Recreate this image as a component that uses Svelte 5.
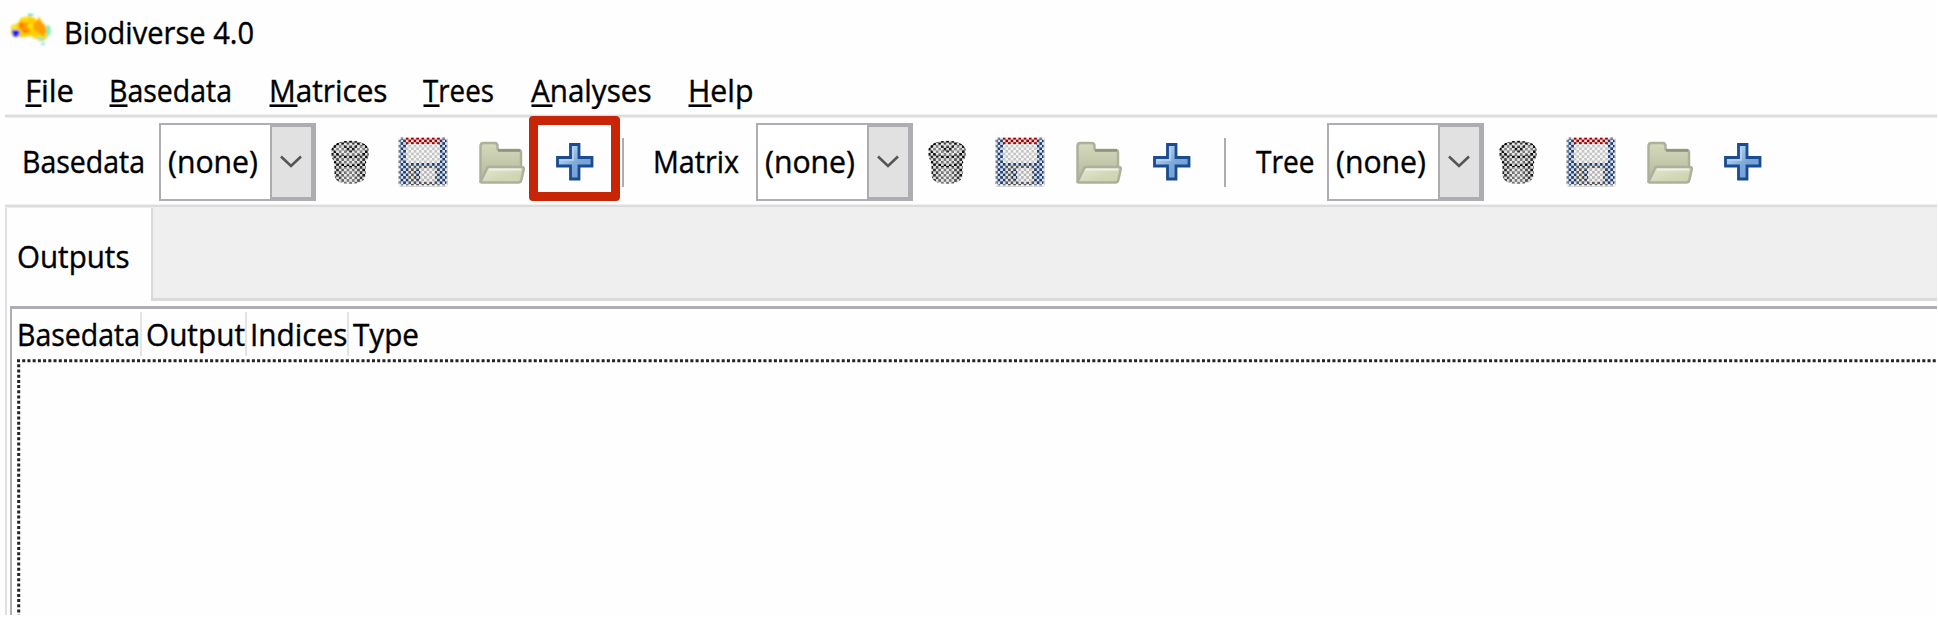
<script>
  const menus = [
    { text: 'File', start: 24.5, width: 49, key: 16 },
    { text: 'Basedata', start: 109, width: 123, key: 18 },
    { text: 'Matrices', start: 268.5, width: 118.5, key: 28 },
    { text: 'Trees', start: 423, width: 71, key: 16 },
    { text: 'Analyses', start: 530.5, width: 120.5, key: 21 },
    { text: 'Help', start: 687.5, width: 65.5, key: 23 }
  ].map((m, i, all) => ({ ...m, gap: i ? m.start - all[i - 1].start - all[i - 1].width : m.start }));

  const groups = [
    { text: 'Basedata', lead: 22, width: 123, gap: 14, highlight: true, tail: 28 },
    { text: 'Matrix', lead: 28, width: 86, gap: 17, tail: 33 },
    { text: 'Tree', lead: 29, width: 58.5, gap: 12.5 }
  ];

  const columns = [
    { text: 'Basedata', pad: 5, width: 123, cell: 130 },
    { text: 'Output', pad: 4, width: 99, cell: 105 },
    { text: 'Indices', pad: 2.5, width: 97.5, cell: 102 },
    { text: 'Type', pad: 4, width: 66, cell: 90 }
  ];
</script>

{#snippet label(text, width, key = 0)}
  <svg class="label" {width} height="40">
    <text x="0" y="31" textLength={width} lengthAdjust="spacingAndGlyphs">{text}</text>
    {#if key}<rect x="0.5" y="33.400" width={key} height="2.6" />{/if}
  </svg>
{/snippet}

<svg class="defs" width="0" height="0">
  <defs>
    <pattern id="dither" width="5.22" height="5.22" patternUnits="userSpaceOnUse">
      <rect width="2.61" height="2.61" fill="#fff" fill-opacity=".85" />
      <rect x="2.61" y="2.61" width="2.61" height="2.61" fill="#fff" fill-opacity=".85" />
    </pattern>
    <linearGradient id="can" x1="0" x2="1" y1="0" y2="0">
      <stop offset="0" stop-color="#111" /><stop offset=".35" stop-color="#777" />
      <stop offset=".6" stop-color="#777" /><stop offset="1" stop-color="#0a0a0a" />
    </linearGradient>
    <linearGradient id="back" x1="0" x2="0" y1="0" y2="1">
      <stop offset="0" stop-color="#d5dabb" /><stop offset="1" stop-color="#b4b89b" />
    </linearGradient>
    <linearGradient id="front" x1="0" x2="1" y1="0" y2="1">
      <stop offset="0" stop-color="#e6e9d8" /><stop offset=".6" stop-color="#d2d7b7" /><stop offset="1" stop-color="#ccd1ae" />
    </linearGradient>
    <linearGradient id="blue" x1="0" x2="1" y1="0" y2="1">
      <stop offset=".2" stop-color="#b5d0ee" /><stop offset=".55" stop-color="#7ba7d9" /><stop offset="1" stop-color="#6f9fd2" />
    </linearGradient>
    <filter id="soft"><feGaussianBlur stdDeviation="1" /></filter>
    <filter id="grain"><feGaussianBlur stdDeviation="0.7" /></filter>
    <filter id="edge"><feGaussianBlur stdDeviation="0.6" /></filter>
  </defs>
</svg>

<div class="window">
  <header class="title">
    <svg class="logo" width="46" height="36" viewBox="8 12 46 36">
      <g filter="url(#soft)">
        <path d="M11 27l7-3 3-5 8-2 6 2 2 3 2-5 3 6 4 4 3 6-2 6-5 4-6-3-5-3-8 1-8 0-4-3z" fill="#ffd000" />
        <path d="M20 23l9 1 2 4-2 5-7 0-3-5zM34 24l5-4 5 6 3 6-4 5-5-4-5-3z" fill="#ff9d00" />
        <path d="M19 24h4v5h-4zM23 31h5v3h-5z" fill="#ff7400" />
        <path d="M28 25h5v4h-5zM23 18h5v3h-5z" fill="#ffe500" />
        <path d="M11 26l4-1 2 5-4 1z" fill="#f2e83a" />
        <path d="M12 31l6 0 2 3-3 4-4-1z" fill="#1020ff" />
        <path d="M28 15h5v2h-5z" fill="#3fd9c0" />
        <path d="M46 26l4 1 1 6-3 5-2-2 1-4zM37 38l8 1-1 3-7-2z" fill="#7df0c0" />
        <path d="M41 44h4v2h-4z" fill="#8fdcf2" />
      </g>
    </svg>
    {@render label('Biodiverse 4.0', 190)}
  </header>

  <nav class="menubar">
    {#each menus as m}
      <div class="menu" style="margin-left: {m.gap}px">{@render label(m.text, m.width, m.key)}</div>
    {/each}
  </nav>
  <div class="rule"></div>

  <div class="toolbar">
    {#each groups as g}
      <div class="group" style="padding-left: {g.lead}px; gap: {g.gap}px">
        {@render label(g.text, g.width)}
        <div class="combo">
          <div class="value">{@render label('(none)', 90)}</div>
          <div class="drop">
            <svg width="24" height="16"><path d="M1 2.500L11 12L21 2.500" fill="none" stroke="#555" stroke-width="2.6" /></svg>
          </div>
        </div>
      </div>
      <svg class="trash" width="40" height="48">
        <g filter="url(#grain)">
          <path d="M3.500 18v18q2 8 15.500 8t15.500-8V18z" fill="url(#can)" />
          <path d="M0.500 9Q4 1 19 1T37.500 9v8q-3 8-18.500 8T0.500 17z" fill="url(#can)" />
          <path d="M3 22q16 8 32 0" stroke="#000" stroke-width="2.500" fill="none" />
          <ellipse cx="19" cy="9.500" rx="16.500" ry="7.500" fill="#808080" stroke="#0a0a0a" stroke-width="2.500" />
          <path d="M10 4q9 5 18 0l-5 8h-7z" fill="#1a1a1a" />
          <rect width="40" height="48" fill="url(#dither)" />
        </g>
      </svg>
      <svg class="floppy" width="50" height="50">
        <g filter="url(#grain)">
          <rect x="0" y="0" width="50" height="50" rx="3" fill="#b8b8b8" />
          <rect x="1.5" y="1.5" width="47" height="46" rx="3" fill="#1c3c70" />
          <rect x="8" y="7" width="34" height="19" rx="2" fill="#c4c4c4" />
          <rect x="8" y="1" width="34" height="6" fill="#9a0000" />
          <rect x="10" y="29" width="29" height="19" rx="2" fill="#555" />
          <rect x="22" y="31" width="15" height="14" rx="2" fill="#b4b4b4" />
          <rect x="17" y="33" width="5" height="10" fill="#1d3558" />
          <rect width="50" height="50" fill="url(#dither)" />
        </g>
      </svg>
      <svg class="folder" width="48" height="44">
        <g filter="url(#edge)" stroke="#adb19c" stroke-width="2.500" stroke-linejoin="round">
          <path d="M2.500 40V5q0-3 3-3h11q3 0 3 3v3q0 1 2 1h19q2.500 0 2.500 2.500v22z" fill="url(#back)" />
          <path d="M20 9.500h22" stroke="#8d927c" />
          <path d="M2.500 41L9 27.500q0-1.500 2-1.500h33q2 0 1.800 2l-2.500 11q-.5 2.500-3 2.500H4z" fill="url(#front)" />
          <path d="M11 28.500h32" stroke="#eef0e6" stroke-width="2" />
        </g>
      </svg>
      <div class="add">
        <svg width="38" height="38">
          <path d="M14.500 1.500h8.500v13h13v8.500h-13v13h-8.500v-13h-13v-8.500h13z" fill="url(#blue)" stroke="#1b4c91" stroke-width="2.800" />
          <path d="M17 4v13H4" fill="none" stroke="#bcd4ee" stroke-width="1.600" />
        </svg>
        {#if g.highlight}<span class="highlight"></span>{/if}
      </div>
      {#if g.tail}<div class="separator" style="margin-left: {g.tail}px"></div>{/if}
    {/each}
  </div>
  <div class="rule"></div>

  <main class="notebook">
    <div class="tabs">
      <div class="tab">{@render label('Outputs', 112.5)}</div>
      <div class="strip"></div>
    </div>
    <section class="tree">
      <div class="columns">
        {#each columns as c, i}
          <div class="column" class:end={i === 3} style="width: {c.cell}px; padding-left: {c.pad}px">{@render label(c.text, c.width)}</div>
        {/each}
      </div>
      <svg class="rows" width="1920" height="256">
        <path d="M0 1.700H1920" />
        <path d="M1.700 5.220V256" />
      </svg>
    </section>
  </main>
</div>

<style>
  :global(body) { margin: 0; background: #fff; overflow: hidden; }
  .window { width: 1937px; height: 615px; overflow: hidden; background: #fefefe; font: 31px "Open Sans", "Noto Sans", sans-serif; color: #000; }
  .window * { box-sizing: border-box; }
  .defs { position: absolute; }
  svg { display: block; flex: none; }
  .label { overflow: visible; }
  .label text { fill: #000; stroke: #000; stroke-width: 0.4px; }
  .title { display: flex; height: 58px; padding: 12px 0 0 8px; }
  .logo { margin-right: 9.5px; margin-top: -1px; }
  .title .label { margin-top: 1px; }
  .menubar { display: flex; height: 56px; padding-top: 13px; }
  .rule { height: 4px; margin-left: 5px; background: linear-gradient(#f0f0f0 0 25%, #dcdcdc 25% 75%, #eee 75%); }
  .toolbar { display: flex; height: 86px; padding-top: 5px; align-items: flex-start; }
  .group { display: flex; }
  .group > .label { margin-top: 18.5px; }
  .combo { display: flex; width: 157px; height: 78px; border: 2px solid #adadb4; background: #fff; }
  .value { width: 109px; padding: 16.5px 0 0 7px; }
  .drop { display: grid; place-items: center; width: 44px; height: 74px; background: #e1e1e1; border: 2px solid #adadb1; border-right-width: 3px; }
  .trash { margin: 17px 0 0 15px; }
  .floppy { margin: 14px 0 0 27px; }
  .folder { margin: 18px 0 0 30px; }
  .add { position: relative; margin: 20px 0 0 30px; }
  .highlight { position: absolute; left: -27px; top: -27px; width: 91px; height: 85px; border: 9px solid #c82506; border-radius: 4px; }
  .separator { width: 2px; height: 49px; margin-top: 15px; margin-right: 1px; background: #adadad; }
  .notebook { height: 407px; margin-left: 5px; border-left: 2px solid #dfdfdf; background: #fefefe; }
  .tabs { display: flex; height: 93px; }
  .tab { width: 144px; padding: 28.5px 0 0 10px; }
  .strip { flex: 1; background: #efefef; border-left: 2px solid #d9d9d9; border-bottom: 3px solid #dadada; }
  .tree { height: 320px; margin: 5px 0 0 3px; border: solid #adadb5; border-width: 3px 0 0 2px; background: #fefefe; }
  .columns { display: flex; height: 50px; padding-top: 3px; }
  .column { height: 44px; padding-top: 2.5px; border-right: 2px solid #e4e4e4; }
  .column.end { border: 0; }
  .rows { margin-left: 5px; }
  .rows path { stroke: #222; stroke-width: 3px; stroke-dasharray: 3 2.22; }
</style>
